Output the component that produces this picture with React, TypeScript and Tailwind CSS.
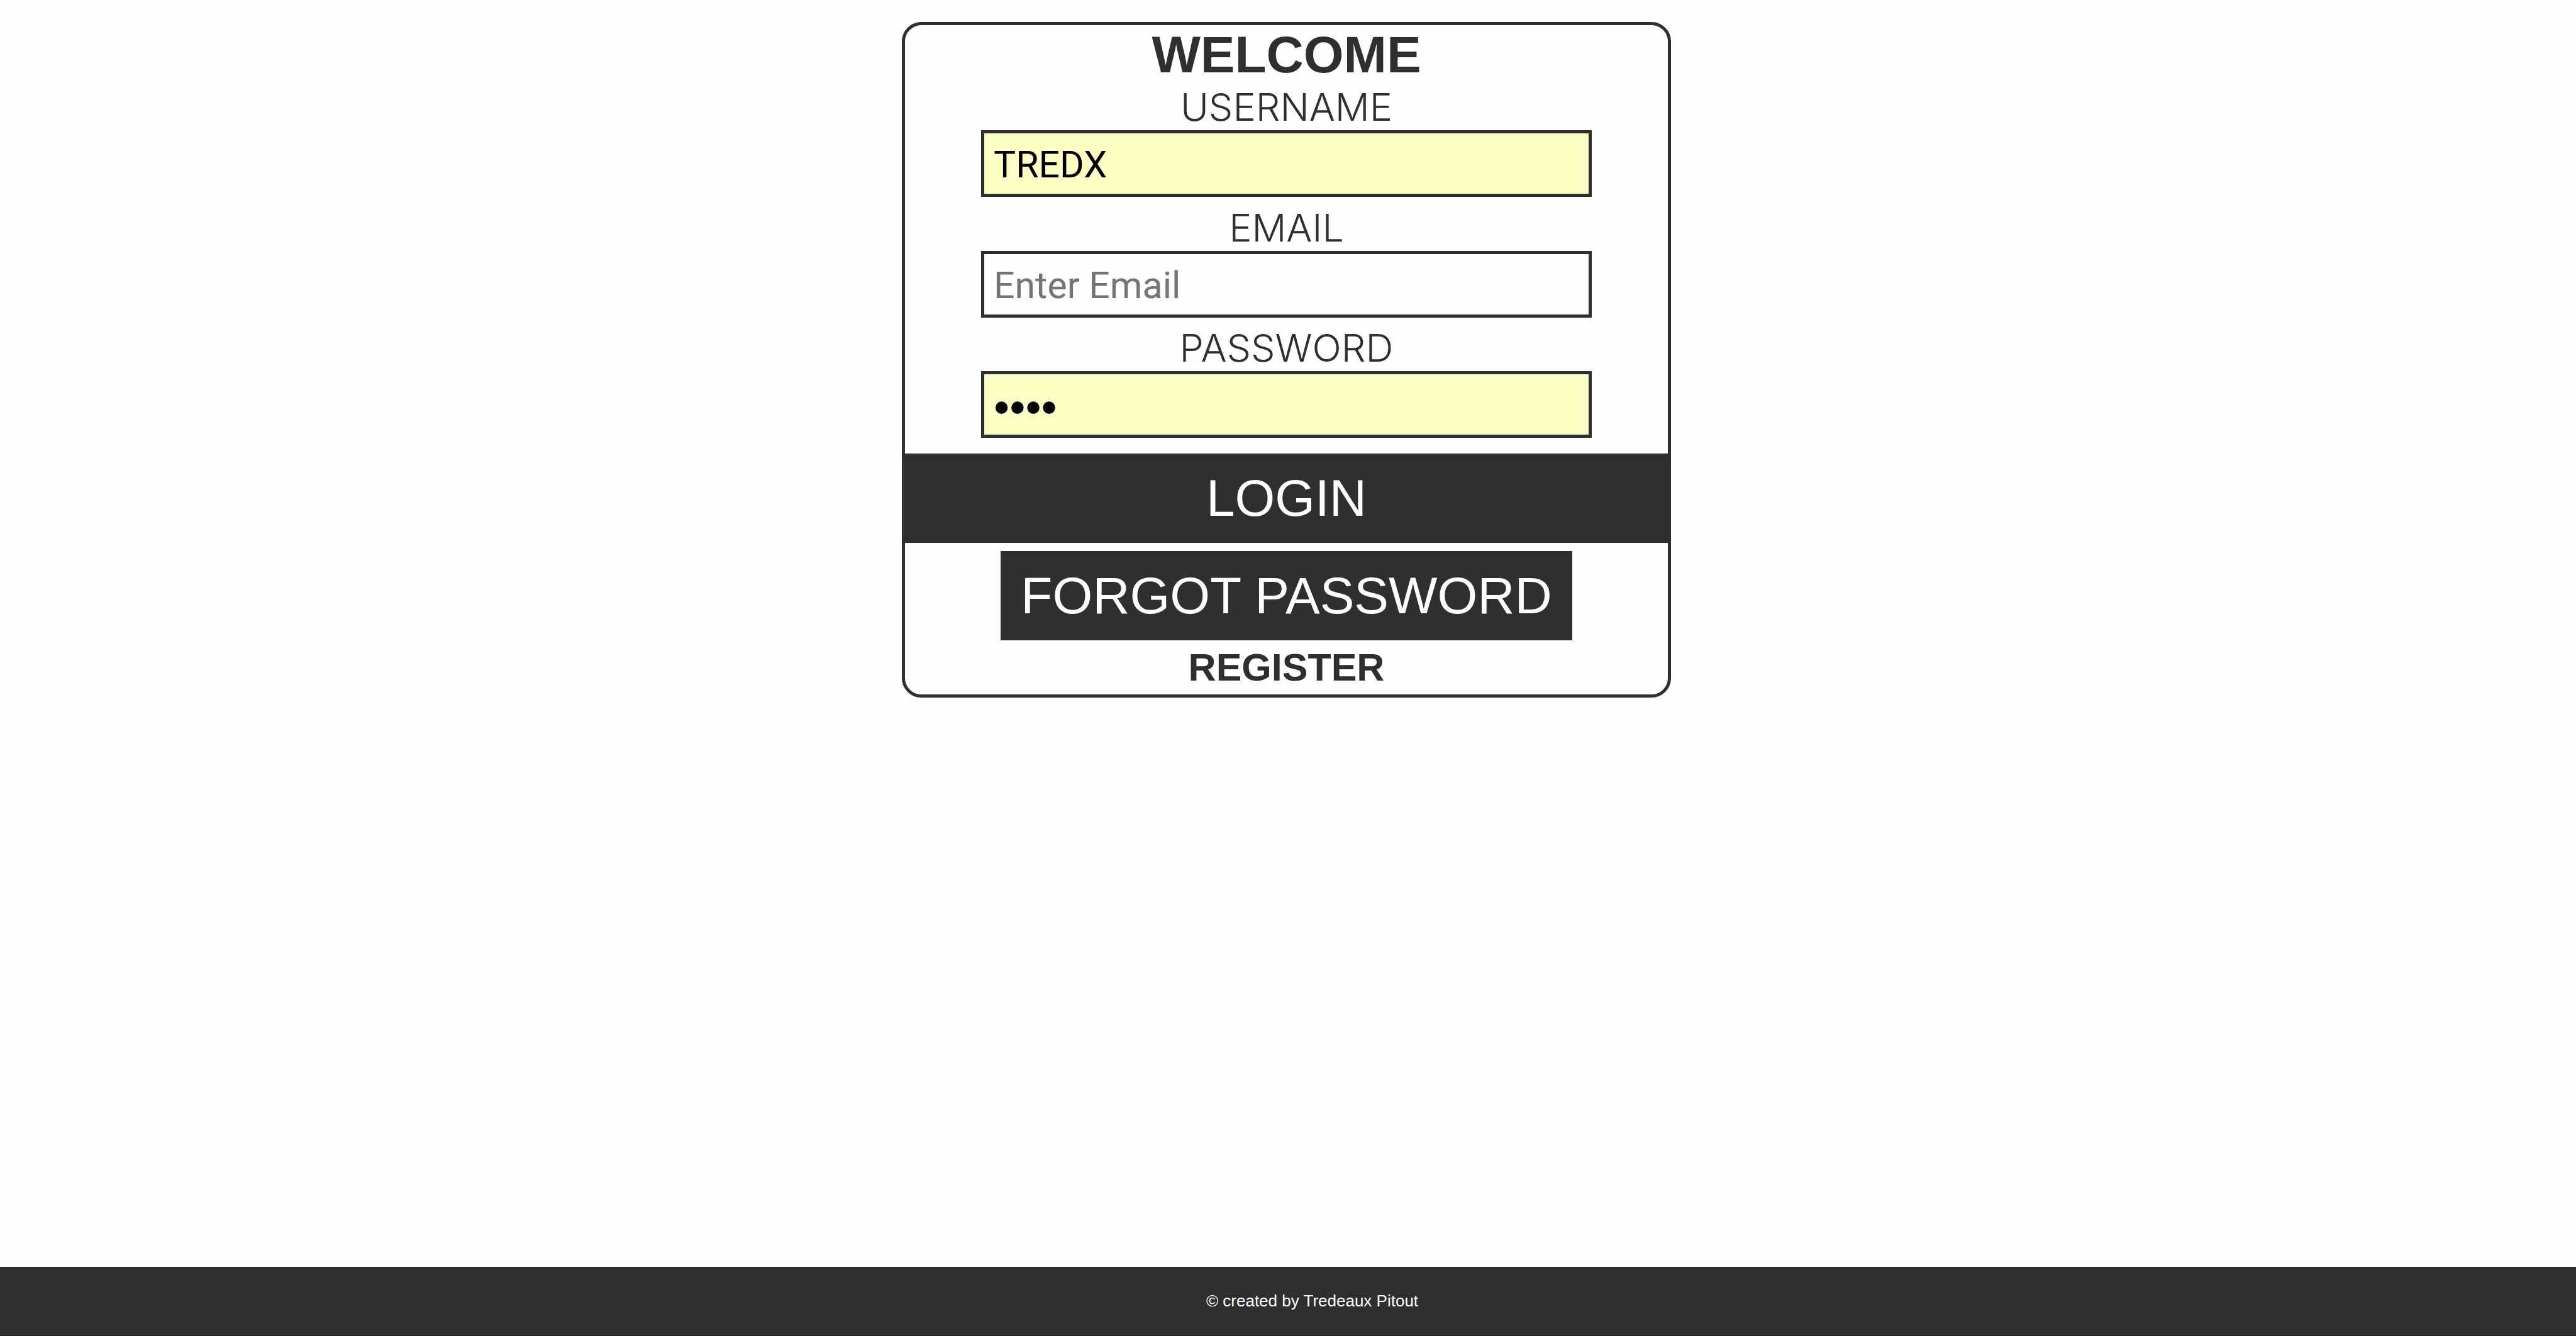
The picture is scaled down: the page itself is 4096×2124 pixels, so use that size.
import React from "react";

const label = "font-['Inter',sans-serif] font-light text-[61px] leading-[74px]";
const field =
  "block h-[106px] w-4/5 border-[5px] border-[#2f2f2f] px-[15px] text-black outline-none placeholder:text-[#757575]";
const fieldText = "pt-[3px] font-['Roboto',sans-serif] text-[59px]";

export default function App() {
  return (
    <div className="flex min-h-screen flex-col bg-[#fefefe] font-['Liberation_Sans',Arial,sans-serif] text-[#2f2f2f]">
      <main className="grow pt-[35px]">
        <form
          className="ml-[35%] flex w-[calc(30%-5px)] flex-col items-center rounded-[31px] border-[5px] border-[#2f2f2f]"
          onSubmit={(e) => e.preventDefault()}
        >
          <h1 className="pt-px text-[82px] leading-[92px] font-bold">WELCOME</h1>
          <label htmlFor="username" className={label}>USERNAME</label>
          <input
            id="username"
            type="text"
            defaultValue="TREDX"
            className={field + " " + fieldText + " mb-3 bg-[#fbffc4]"}
          />
          <label htmlFor="email" className={label}>EMAIL</label>
          <input
            id="email"
            type="email"
            placeholder="Enter Email"
            className={field + " " + fieldText + " mb-[11px] bg-[#fefefe]"}
          />
          <label htmlFor="password" className={label}>PASSWORD</label>
          <input
            id="password"
            type="password"
            defaultValue="1234"
            className={field + " mb-[25px] bg-[#fbffc4] pt-2 text-[72px]"}
          />
          <button type="submit" className="h-[142px] w-full bg-[#2f2f2f] text-[82px] leading-[94px] text-[#fefefe]">
            LOGIN
          </button>
          <button type="button" className="mt-[13px] h-[142px] bg-[#2f2f2f] px-8 text-[82px] leading-[94px] text-[#fefefe]">
            FORGOT PASSWORD
          </button>
          <a href="#register" className="py-2 text-[61px] leading-[70px] font-bold">REGISTER</a>
        </form>
      </main>
      <footer className="flex h-[110px] items-center justify-center border-b border-[#1c1c1c] bg-[#2f2f2f] pb-[2px] pl-[77px] text-[26px] leading-[30px] text-[#fefefe]">
        <p>© created by Tredeaux Pitout</p>
      </footer>
    </div>
  );
}
